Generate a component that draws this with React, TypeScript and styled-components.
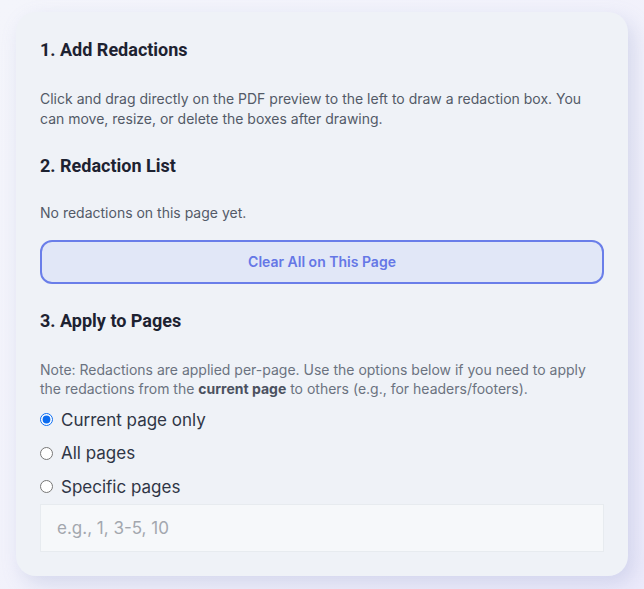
import { useState } from 'react';
import styled, { createGlobalStyle } from 'styled-components';

const GlobalStyle = createGlobalStyle`
  html, body {
    margin: 0;
    padding: 0;
  }
  body {
    background: linear-gradient(135deg, #f4f5fb 0%, #f1f1fb 60%, #ecebfb 100%);
    font-family: Inter, 'Noto Sans', sans-serif;
    min-height: 100vh;
  }
`;

const Page = styled.div`
  padding: 12px 16px 13px 16px;
  box-sizing: border-box;
  width: 644px;
`;

const Panel = styled.div`
  background-color: #eff2f7;
  border-radius: 20px;
  padding: 24px 24px 24px 24px;
  box-shadow: 6px 8px 20px rgba(140, 150, 200, 0.28);
  box-sizing: border-box;
`;

const SectionTitle = styled.h3<{ $gap?: number }>`
  font-family: Roboto, 'Noto Sans', sans-serif;
  font-weight: 700;
  font-size: 18px;
  line-height: 28px;
  color: #1d2231;
  margin: 0 0 ${({ $gap }) => $gap ?? 24}px 0;
`;

const Text = styled.p<{ $muted?: boolean; $mb?: number }>`
  font-size: 14px;
  line-height: 19.5px;
  color: ${({ $muted }) => ($muted ? '#6b7280' : '#535a67')};
  margin: 0 0 ${({ $mb }) => $mb ?? 0}px 0;

  strong {
    font-weight: 700;
    color: #4b5160;
  }
`;

const ClearButton = styled.button`
  display: block;
  width: 100%;
  height: 44px;
  border: 2px solid #6a7ee9;
  border-radius: 12px;
  background-color: #e1e7f7;
  color: #6577e6;
  font-family: Inter, 'Noto Sans', sans-serif;
  font-weight: 600;
  font-size: 14px;
  cursor: pointer;
  margin-bottom: 23px;
`;

const RadioGroup = styled.div`
  display: flex;
  flex-direction: column;
  gap: 9.5px;
  margin-top: 9px;
`;

const RadioLabel = styled.label`
  display: flex;
  align-items: center;
  gap: 8px;
  font-size: 17px;
  line-height: 24px;
  color: #2f3646;
  cursor: pointer;

  input {
    margin: 0;
    width: 13px;
    height: 13px;
    accent-color: #0b6cf0;
  }
`;

const PagesInput = styled.input`
  display: block;
  width: 100%;
  box-sizing: border-box;
  height: 48px;
  margin-top: 5px;
  padding: 0 16px;
  border: 1px solid #e7ebef;
  background-color: #f6f8fa;
  font-family: Inter, 'Noto Sans', sans-serif;
  font-size: 17px;
  color: #333a4a;
  outline: none;

  &::placeholder {
    color: #a3a7ae;
  }
`;

const options = [
  { value: 'current', label: 'Current page only' },
  { value: 'all', label: 'All pages' },
  { value: 'specific', label: 'Specific pages' },
];

const App = () => {
  const [scope, setScope] = useState('current');
  const [pages, setPages] = useState('');

  return (
    <Page>
      <GlobalStyle />
      <Panel>
        <SectionTitle $gap={25}>1. Add Redactions</SectionTitle>
        <Text $mb={24}>
          Click and drag directly on the PDF preview to the left to draw a redaction box. You
          can move, resize, or delete the boxes after drawing.
        </Text>

        <SectionTitle $gap={23}>2. Redaction List</SectionTitle>
        <Text $mb={17}>No redactions on this page yet.</Text>
        <ClearButton>Clear All on This Page</ClearButton>

        <SectionTitle $gap={25}>3. Apply to Pages</SectionTitle>
        <Text $muted>
          Note: Redactions are applied per-page. Use the options below if you need to apply
          the redactions from the <strong>current page</strong> to others (e.g., for headers/footers).
        </Text>

        <RadioGroup>
          {options.map(opt => (
            <RadioLabel key={opt.value}>
              <input
                type="radio"
                name="scope"
                value={opt.value}
                checked={scope === opt.value}
                onChange={() => setScope(opt.value)}
              />
              {opt.label}
            </RadioLabel>
          ))}
        </RadioGroup>

        <PagesInput
          type="text"
          placeholder="e.g., 1, 3-5, 10"
          value={pages}
          onChange={e => setPages(e.target.value)}
        />
      </Panel>
    </Page>
  );
};

export default App;
